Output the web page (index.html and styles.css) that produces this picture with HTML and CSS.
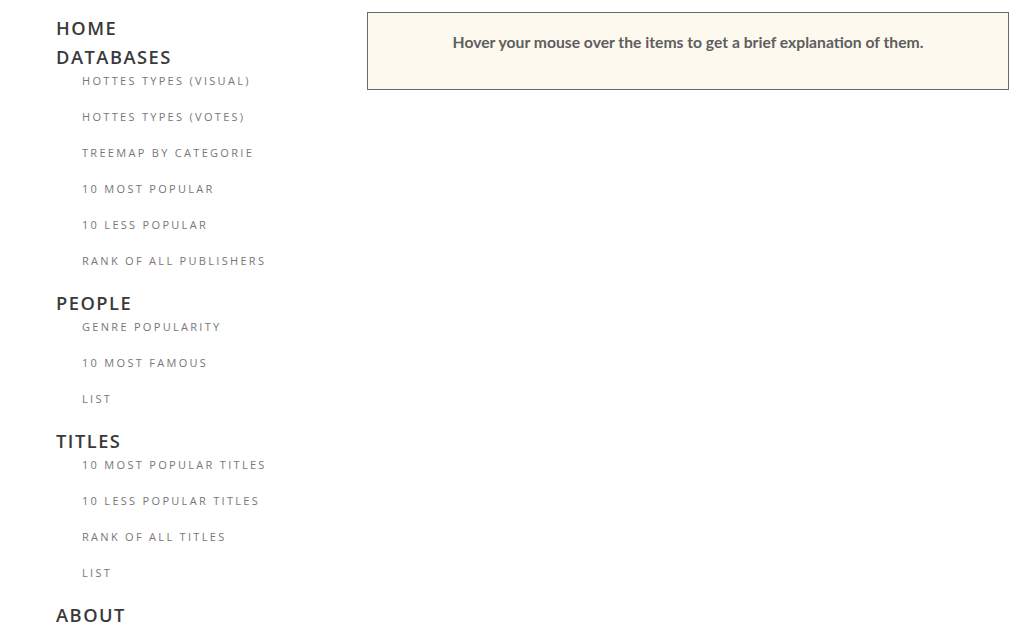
FILE: index.html
```html
<!DOCTYPE html>
<html>
<head>
<meta charset="utf-8">
<link rel="stylesheet" href="styles.css">
</head>
<body>
<div class="page">
  <nav class="side">
    <div class="head">HOME</div>
    <div class="head">DATABASES</div>
    <ul class="items">
      <li>HOTTES TYPES (VISUAL)</li>
      <li>HOTTES TYPES (VOTES)</li>
      <li>TREEMAP BY CATEGORIE</li>
      <li>10 MOST POPULAR</li>
      <li>10 LESS POPULAR</li>
      <li>RANK OF ALL PUBLISHERS</li>
    </ul>
    <div class="head">PEOPLE</div>
    <ul class="items">
      <li>GENRE POPULARITY</li>
      <li>10 MOST FAMOUS</li>
      <li>LIST</li>
    </ul>
    <div class="head">TITLES</div>
    <ul class="items">
      <li>10 MOST POPULAR TITLES</li>
      <li>10 LESS POPULAR TITLES</li>
      <li>RANK OF ALL TITLES</li>
      <li>LIST</li>
    </ul>
    <div class="head">ABOUT</div>
  </nav>
  <main class="content">
    <div class="info">Hover your mouse over the items to get a brief explanation of them.</div>
  </main>
</div>
</body>
</html>
```
FILE: styles.css
```css
html, body {
  margin: 0;
  padding: 0;
  background: #fff;
}
body {
  font-family: "Open Sans", "Noto Sans", sans-serif;
}
.page {
  display: flex;
  align-items: flex-start;
}
.side {
  width: 311px;
  padding-left: 56px;
  padding-top: 13px;
}
.head {
  font-size: 18.3px;
  line-height: 29px;
  font-weight: 600;
  letter-spacing: 1.5px;
  color: #3a3a3a;
}
.items {
  list-style: none;
  margin: 0;
  padding: 1px 0 0 26px;
}
.items li {
  font-size: 11px;
  line-height: 18px;
  margin-bottom: 18px;
  letter-spacing: 2.3px;
  color: #777;
}
.content {
  flex: 1;
  margin: 12px 16px 0 0;
}
.info {
  height: 57px;
  padding-top: 19px;
  border: 1px solid #6a6a6a;
  background: #fdf9ee;
  text-align: center;
  font-family: "Lato", sans-serif;
  font-weight: 700;
  font-size: 15.7px;
  line-height: 20px;
  color: #5e5e5e;
}
```
